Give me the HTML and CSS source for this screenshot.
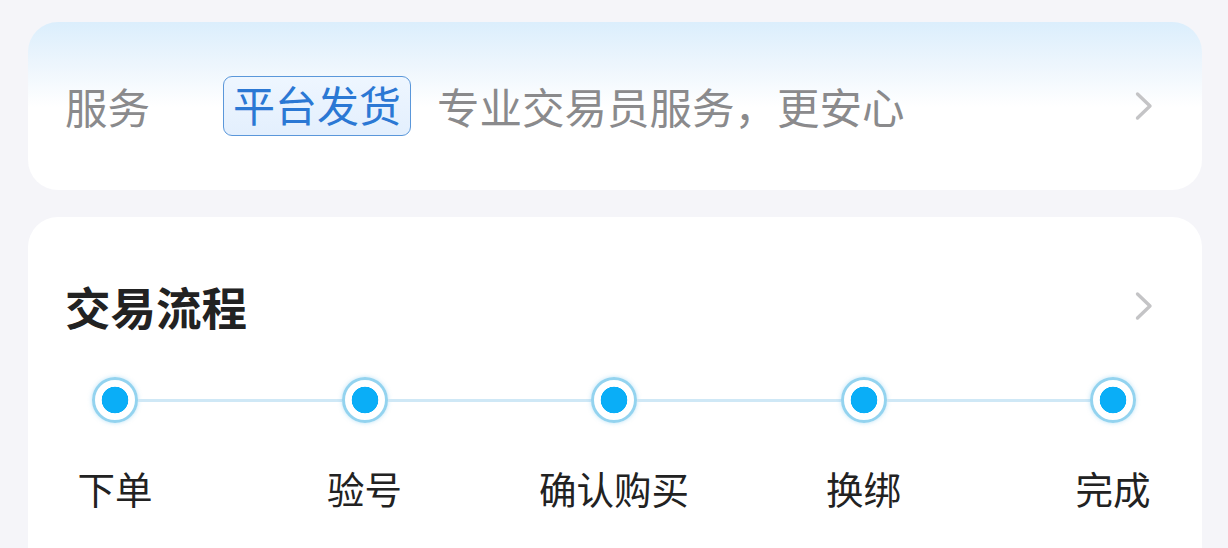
FILE: index.html
```html
<!DOCTYPE html>
<html lang="zh-CN">
<head>
<meta charset="utf-8">
<link rel="stylesheet" href="styles.css">
</head>
<body>
<div class="page">
  <section class="card service">
    <div class="service-row">
      <span class="service-label">服务</span>
      <span class="tag">平台发货</span>
      <span class="service-desc">专业交易员服务，更安心</span>
      <svg class="chev" viewBox="0 0 20 30" width="20" height="30"><path d="M3.5 3 L16 15 L3.5 27" fill="none" stroke="#c4c4c6" stroke-width="3.4" stroke-linecap="round" stroke-linejoin="round"/></svg>
    </div>
  </section>
  <section class="card flow">
    <div class="flow-head">
      <h2 class="flow-title">交易流程</h2>
      <svg class="chev" viewBox="0 0 20 30" width="20" height="30"><path d="M3.5 3 L16 15 L3.5 27" fill="none" stroke="#c4c4c6" stroke-width="3.4" stroke-linecap="round" stroke-linejoin="round"/></svg>
    </div>
    <div class="track">
      <span class="dot"></span><span class="line"></span>
      <span class="dot"></span><span class="line"></span>
      <span class="dot"></span><span class="line"></span>
      <span class="dot"></span><span class="line"></span>
      <span class="dot"></span>
    </div>
    <div class="labels">
      <span class="label">下单</span>
      <span class="label">验号</span>
      <span class="label">确认购买</span>
      <span class="label">换绑</span>
      <span class="label">完成</span>
    </div>
  </section>
</div>
</body>
</html>
```
FILE: styles.css
```css
html, body {
  margin: 0;
  padding: 0;
  background: #f5f5f9;
  font-family: "Noto Sans CJK SC", "Noto Sans", sans-serif;
}
.page {
  width: 1228px;
  height: 548px;
  overflow: hidden;
  box-sizing: border-box;
  padding: 22px 26px 0 28px;
  display: flex;
  flex-direction: column;
  gap: 27px;
}
.card {
  background: #fff;
  border-radius: 30px;
}
.service {
  flex: none;
  height: 168px;
  box-sizing: border-box;
  background: linear-gradient(180deg, #dbeefc 0px, #eef6fd 45px, #ffffff 85px, #ffffff 100%);
  display: flex;
  align-items: center;
  padding: 0 48px 0 37px;
}
.service-row {
  display: flex;
  align-items: center;
  width: 100%;
  height: 60px;
}
.service-label {
  width: 158px;
  font-size: 42.5px;
  line-height: 56px;
  color: #8a8a8c;
}
.tag {
  box-sizing: border-box;
  height: 60px;
  padding: 0 9px;
  border: 1.5px solid #5a97da;
  border-radius: 9px;
  background: linear-gradient(180deg, #eef6ff, #e3effd);
  color: #2b78d4;
  font-size: 42px;
  line-height: 54px;
}
.service-desc {
  margin-left: 26px;
  flex: 1;
  font-size: 42.5px;
  line-height: 56px;
  color: #8a8a8c;
}
.chev {
  display: block;
  flex: none;
}
.flow {
  flex: 1;
  padding: 59px 48px 0 37px;
  border-bottom-left-radius: 0;
  border-bottom-right-radius: 0;
}
.flow-head {
  display: flex;
  align-items: center;
  justify-content: space-between;
  height: 60px;
}
.flow-title {
  margin: 0;
  font-size: 45.5px;
  font-weight: 700;
  line-height: 60px;
  color: #222;
}
.track {
  display: flex;
  align-items: center;
  margin: 41px 18px 0 27px;
  height: 46px;
}
.dot {
  flex: none;
  box-sizing: border-box;
  width: 46px;
  height: 46px;
  border-radius: 50%;
  border: 3.5px solid #93d3ef;
  background: radial-gradient(circle, #0aaef7 0 13px, #fff 13.6px);
  box-shadow: 0 0 4px rgba(120, 200, 240, 0.5);
}
.line {
  flex: 1;
  height: 3px;
  background: #cfe8f6;
}
.labels {
  display: flex;
  justify-content: space-between;
  margin: 40px -9px 0 0;
}
.label {
  display: flex;
  justify-content: center;
  width: 100px;
  white-space: nowrap;
  font-size: 37.5px;
  line-height: 50px;
  color: #222;
}
```
